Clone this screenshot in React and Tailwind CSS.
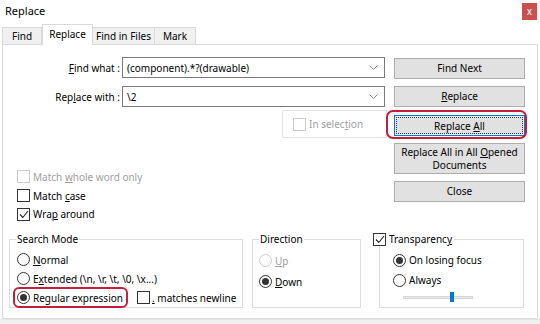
import React from "react";

function U({ children }) {
  return <span className="underline underline-offset-[1px] decoration-[0.5px]">{children}</span>;
}

function Check({ checked, disabled }) {
  return (
    <span
      className={`w-[13px] h-[13px] border bg-white shrink-0 flex items-center justify-center ${
        disabled ? "border-[#cccccc]" : "border-[#333333]"
      }`}
    >
      {checked && (
        <svg width="10" height="9" viewBox="0 0 10 9">
          <polyline points="1,4.5 3.8,7.5 9,1" fill="none" stroke="#222" strokeWidth="1.1" />
        </svg>
      )}
    </span>
  );
}

function Radio({ checked, disabled }) {
  return (
    <span
      className={`w-[13px] h-[13px] rounded-full border bg-white shrink-0 flex items-center justify-center ${
        disabled ? "border-[#cccccc]" : "border-[#333333]"
      }`}
    >
      {checked && <span className="w-[7px] h-[7px] rounded-full bg-[#333333]" />}
    </span>
  );
}

function Combo({ value }) {
  return (
    <div className="flex-1 h-full border border-[#7a7a7a] bg-white flex items-center pl-[4px] pr-[6px]">
      <span className="flex-1">{value}</span>
      <svg width="9" height="5" viewBox="0 0 9 5">
        <polyline points="0.5,0.5 4.5,4.5 8.5,0.5" fill="none" stroke="#8a8a8a" strokeWidth="1" />
      </svg>
    </div>
  );
}

const btn = "w-full bg-[#e1e1e1] border border-[#adadad] flex items-center justify-center text-center leading-[13px]";

export default function App() {
  return (
    <div className="w-[540px] h-[324px] bg-white flex flex-col overflow-hidden text-[10px] leading-[14px] text-black font-['Noto_Sans',sans-serif]">
      {/* title bar */}
      <div className="h-[24px] flex justify-between shrink-0">
        <span className="ml-[5px] mt-[4px] text-[11px]">Replace</span>
        <div className="mt-[3px] mr-[3px] w-[15px] h-[17px] bg-[#c9504f] flex items-center justify-center text-white text-[10px] leading-none pb-[2px]">
          x
        </div>
      </div>

      {/* tabs */}
      <div className="flex items-end pl-[2px] h-[21px] shrink-0 relative z-10 -mb-px">
        <div className="w-[40px] h-[17px] mb-px border border-b-0 border-[#d9d9d9] bg-[#f0f0f0] flex items-center justify-center">Find</div>
        <div className="w-[51px] h-[21px] border border-b-0 border-[#d9d9d9] bg-white flex items-start pt-[2px] justify-center">Replace</div>
        <div className="w-[62px] h-[17px] mb-px border border-b-0 border-l-0 border-[#d9d9d9] bg-[#f0f0f0] flex items-center justify-center">Find in Files</div>
        <div className="w-[41px] h-[17px] mb-px border border-b-0 border-l-0 border-[#d9d9d9] bg-[#f0f0f0] flex items-center justify-center">Mark</div>
      </div>

      {/* tab page */}
      <div className="mx-[2px] h-[275px] shrink-0 border border-[#d9d9d9] bg-white flex flex-col">
        <div className="flex mt-[12px]">
          {/* left column */}
          <div className="w-[382px] flex flex-col">
            <div className="h-[21px] flex items-center">
              <span className="w-[117px] text-right">
                <U>F</U>ind what :
              </span>
              <div className="ml-[2px] flex-1 h-full flex">
                <Combo value="(component).*?(drawable)" />
              </div>
            </div>
            <div className="h-[21px] mt-[8px] flex items-center">
              <span className="w-[117px] text-right">
                Rep<U>l</U>ace with :
              </span>
              <div className="ml-[2px] flex-1 h-full flex">
                <Combo value="\2" />
              </div>
            </div>
            <div className="self-end mr-[-2px] mt-[3px] w-[105px] h-[28px] border border-[#e3e3e3] flex items-center pl-[10px] gap-[3px] text-[#a0a0a0]">
              <Check disabled />
              <span>
                In selec<U>t</U>ion
              </span>
            </div>
            <div className="mt-[29px] pl-[14px] flex flex-col">
              <div className="h-[19px] flex items-center gap-[3px] text-[#a0a0a0]">
                <Check disabled />
                <span>
                  Match <U>w</U>hole word only
                </span>
              </div>
              <div className="h-[19px] flex items-center gap-[3px]">
                <Check />
                <span>
                  Match <U>c</U>ase
                </span>
              </div>
              <div className="h-[18px] flex items-center gap-[3px]">
                <Check checked />
                <span>
                  Wra<U>p</U> around
                </span>
              </div>
            </div>
          </div>

          {/* right column: buttons */}
          <div className="ml-[9px] w-[131px] flex flex-col">
            <div className={`${btn} mt-[1px] h-[21px]`}>Find Next</div>
            <div className={`${btn} mt-[7px] h-[21px]`}>
              <span>
                <U>R</U>eplace
              </span>
            </div>
            <div className="relative mt-[8px] h-[21px]">
              <div className="w-full h-full bg-[#e5f1fb] border border-[#0078d7] p-[1px]">
                <div className="w-full h-full border border-dotted border-[#333] bg-[#e1e1e1] flex items-center justify-center">
                  <span>
                    Replace <U>A</U>ll
                  </span>
                </div>
              </div>
              <div className="absolute -left-[8px] -top-[5px] w-[141px] h-[29px] border-[2.5px] border-[#c41e3a] rounded-[7px]" />
            </div>
            <div className={`${btn} mt-[7px] h-[31px]`}>
              <span>
                Replace All in All <U>O</U>pened
                <br />
                Documents
              </span>
            </div>
            <div className={`${btn} mt-[7px] h-[21px]`}>Close</div>
          </div>
        </div>

        {/* group boxes */}
        <div className="flex mt-[9px] ml-[6px]">
          <fieldset className="w-[234px] h-[76px] border border-[#dcdcdc]">
            <legend className="ml-[6px] px-[1px] leading-[14px]">Search Mode</legend>
            <div className="pl-[7px] pt-[4px] flex flex-col">
              <div className="h-[19px] flex items-center gap-[3px]">
                <Radio />
                <span>
                  <U>N</U>ormal
                </span>
              </div>
              <div className="h-[19px] flex items-center gap-[3px]">
                <Radio />
                <span>
                  E<U>x</U>tended (\n, \r, \t, \0, \x...)
                </span>
              </div>
              <div className="h-[19px] flex items-center">
                <div className="relative w-[120px] flex items-center gap-[3px]">
                  <Radio checked />
                  <span>Regular expression</span>
                  <div className="absolute -left-[4px] -top-[4px] w-[115px] h-[21px] border-[2.5px] border-[#c41e3a] rounded-[6px]" />
                </div>
                <div className="flex items-center gap-[2px]">
                  <Check />
                  <span>
                    <U>.</U> matches newline
                  </span>
                </div>
              </div>
            </div>
          </fieldset>

          <fieldset className="ml-[9px] w-[109px] h-[76px] border border-[#dcdcdc]">
            <legend className="ml-[6px] px-[1px] leading-[14px]">Direction</legend>
            <div className="pl-[6px] pt-[4px] flex flex-col">
              <div className="h-[21px] flex items-center gap-[3px] text-[#a0a0a0]">
                <Radio disabled />
                <span>
                  <U>U</U>p
                </span>
              </div>
              <div className="h-[21px] flex items-center gap-[3px]">
                <Radio checked />
                <span>
                  <U>D</U>own
                </span>
              </div>
            </div>
          </fieldset>

          <fieldset className="ml-[18px] w-[145px] h-[76px] border border-[#dcdcdc]">
            <legend className="-ml-[7px] pr-[2px] leading-[14px] flex items-center gap-[3px]">
              <Check checked />
              <span>
                Transparenc<U>y</U>
              </span>
            </legend>
            <div className="pl-[13px] pt-[4px] flex flex-col">
              <div className="h-[20px] flex items-center gap-[3px]">
                <Radio checked />
                <span>On losing focus</span>
              </div>
              <div className="h-[20px] flex items-center gap-[3px]">
                <Radio />
                <span>Always</span>
              </div>
              <div className="ml-[10px] mt-[1px] w-[70px] h-[12px] flex items-center relative">
                <div className="w-full h-[3px] bg-[#e7e7e7] border border-[#d6d6d6]" />
                <div className="absolute left-[47px] top-[1px] w-[4px] h-[10px] bg-[#0078d7]" />
              </div>
            </div>
          </fieldset>
        </div>
      </div>

      <div className="flex-1 bg-[#f0f0f0] border-t border-[#e6e6e6]" />
    </div>
  );
}
